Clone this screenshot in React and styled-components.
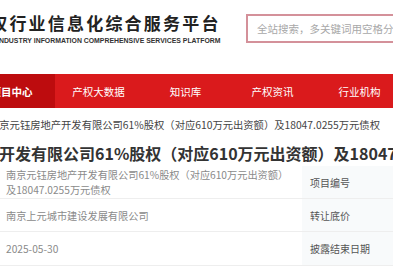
import React from "react";
import styled, { createGlobalStyle } from "styled-components";

const GlobalStyle = createGlobalStyle`
    html, body {
        margin: 0;
        padding: 0;
        background: #ffffff;
        overflow: hidden;
    }
    body {
        font-family: "Noto Sans CJK SC", "Noto Sans", sans-serif;
        color: #333;
    }
`;

const Page = styled.div`
    width: 393px;
    height: 267px;
    overflow: hidden;
`;

// header
const Header = styled.div`
    display: flex;
    align-items: flex-start;
    height: 74px;
    padding-top: 13px;
    box-sizing: border-box;
`;

const Brand = styled.div`
    display: flex;
    flex-direction: column;
    margin-left: -29px;
    width: 265px;
    flex-shrink: 0;
`;

const BrandTitle = styled.div`
    font-size: 17px;
    font-weight: 700;
    letter-spacing: 2.2px;
    line-height: 20px;
    color: #222;
    white-space: nowrap;
`;

const BrandSub = styled.div`
    font-family: "Liberation Sans", Arial, sans-serif;
    font-size: 6.9px;
    font-weight: 700;
    color: #333;
    line-height: 10px;
    margin-top: 3px;
    margin-left: 26px;
    white-space: nowrap;
`;

const SearchBox = styled.div`
    margin-left: 10px;
    margin-top: 1px;
    width: 200px;
    height: 29px;
    border: 2px solid #d4919a;
    box-sizing: border-box;
    display: flex;
    align-items: center;
    padding-left: 9px;
    font-size: 10.5px;
    color: #a8a8a8;
    white-space: nowrap;
    flex-shrink: 0;
`;

// nav
const Nav = styled.div`
    display: flex;
    height: 34px;
    background: #da1a1c;
    margin-left: -32px;
`;

const NavItem = styled.div`
    width: 87px;
    flex-shrink: 0;
    display: flex;
    align-items: center;
    justify-content: center;
    color: #fff;
    font-size: 10.5px;
    font-weight: ${(p) => (p.$active ? 700 : 400)};
    background: ${(p) => (p.$active ? "#bd0c0e" : "transparent")};
    white-space: nowrap;
`;

// breadcrumb + title
const Crumb = styled.div`
    height: 32px;
    display: flex;
    align-items: center;
    margin-left: -11px;
    font-size: 10.3px;
    color: #444;
    white-space: nowrap;
`;

const Title = styled.div`
    height: 26px;
    line-height: 26px;
    margin-left: -113px;
    font-size: 16px;
    font-weight: 700;
    color: #333;
    white-space: nowrap;
`;

// table
const Table = styled.div`
    display: grid;
    grid-template-columns: 302px 1fr;
`;

const ValueCell = styled.div`
    min-height: ${(p) => p.$h}px;
    box-sizing: border-box;
    border-bottom: 1px solid #eeeeee;
    padding: 0 14px 0 6px;
    display: flex;
    align-items: center;
    font-size: 10.2px;
    line-height: 15px;
    color: #8a8a8a;
`;

const LabelCell = styled.div`
    box-sizing: border-box;
    border-bottom: 1px solid #eeeeee;
    background: #f8fafb;
    padding-left: 8px;
    display: flex;
    align-items: center;
    font-size: 10px;
    color: #555;
    white-space: nowrap;
`;

const rows = [
    {
        value: "南京元钰房地产开发有限公司61%股权（对应610万元出资额）及18047.0255万元债权",
        label: "项目编号",
        h: 33,
    },
    { value: "南京上元城市建设发展有限公司", label: "转让底价", h: 33 },
    { value: "2025-05-30", label: "披露结束日期", h: 34 },
];

const navs = ["项目中心", "产权大数据", "知识库", "产权资讯", "行业机构"];

export default function App() {
    return (
        <Page>
            <GlobalStyle />
            <Header>
                <Brand>
                    <BrandTitle>产权行业信息化综合服务平台</BrandTitle>
                    <BrandSub>INDUSTRY INFORMATION COMPREHENSIVE SERVICES PLATFORM</BrandSub>
                </Brand>
                <SearchBox>全站搜索，多关键词用空格分隔</SearchBox>
            </Header>
            <Nav>
                {navs.map((n, i) => (
                    <NavItem key={n} $active={i === 0}>
                        {n}
                    </NavItem>
                ))}
            </Nav>
            <Crumb>南京元钰房地产开发有限公司61%股权（对应610万元出资额）及18047.0255万元债权</Crumb>
            <Title>南京元钰房地产开发有限公司61%股权（对应610万元出资额）及18047.0255万元债权</Title>
            <Table>
                {rows.map((r) => (
                    <React.Fragment key={r.label}>
                        <ValueCell $h={r.h}>{r.value}</ValueCell>
                        <LabelCell>{r.label}</LabelCell>
                    </React.Fragment>
                ))}
            </Table>
        </Page>
    );
}
